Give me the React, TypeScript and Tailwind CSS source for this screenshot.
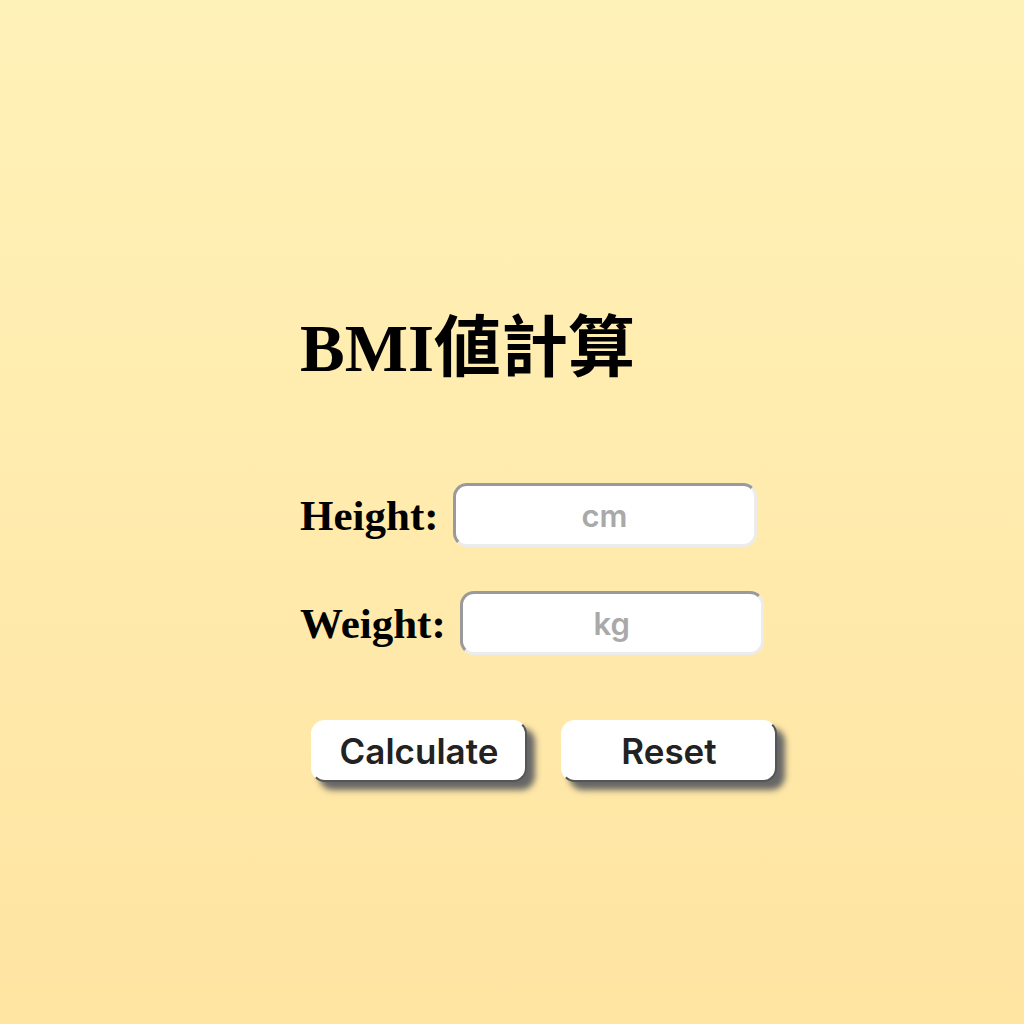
import { useState } from "react";

export default function App() {
  const [height, setHeight] = useState("");
  const [weight, setWeight] = useState("");

  const reset = () => {
    setHeight("");
    setWeight("");
  };

  return (
    <div className="min-h-screen w-full bg-linear-to-b from-[#fff2b8] to-[#ffe4a2] pl-[300px] pt-[315px] font-['Liberation_Serif','Noto_Sans_CJK_TC',serif]">
      {/* Title */}
      <h1 className="text-[67px] font-bold leading-none text-black">BMI値計算</h1>

      {/* Form */}
      <div className="mt-[101px] flex flex-col gap-[44px]">
        <div className="flex items-center gap-[14px]">
          <label className="text-[43px] font-bold text-black leading-none">Height:</label>
          <input
            value={height}
            onChange={(e) => setHeight(e.target.value)}
            placeholder="cm"
            className="h-[64px] w-[304px] rounded-[14px] border-[3px] border-t-[#9a9a9a] border-l-[#9a9a9a] border-r-[#ececec] border-b-[#ececec] bg-white text-center font-['Inter',sans-serif] text-[31px] font-semibold text-[#333] placeholder:text-[#a9a9a9] outline-none"
          />
        </div>
        <div className="flex items-center gap-[14px]">
          <label className="text-[43px] font-bold text-black leading-none">Weight:</label>
          <input
            value={weight}
            onChange={(e) => setWeight(e.target.value)}
            placeholder="kg"
            className="h-[64px] w-[304px] rounded-[14px] border-[3px] border-t-[#9a9a9a] border-l-[#9a9a9a] border-r-[#ececec] border-b-[#ececec] bg-white text-center font-['Inter',sans-serif] text-[31px] font-semibold text-[#333] placeholder:text-[#a9a9a9] outline-none"
          />
        </div>
      </div>

      {/* Buttons */}
      <div className="ml-[11px] mt-[65px] flex gap-[34px]">
        <button className="h-[62px] w-[216px] rounded-[14px] border-2 border-t-white border-l-white border-r-[#555] border-b-[#555] bg-white font-['Inter',sans-serif] text-[35px] font-semibold text-[#222] shadow-[8px_8px_6px_#666]">
          Calculate
        </button>
        <button
          onClick={reset}
          className="h-[62px] w-[216px] rounded-[14px] border-2 border-t-white border-l-white border-r-[#555] border-b-[#555] bg-white font-['Inter',sans-serif] text-[35px] font-semibold text-[#222] shadow-[8px_8px_6px_#666]"
        >
          Reset
        </button>
      </div>
    </div>
  );
}
